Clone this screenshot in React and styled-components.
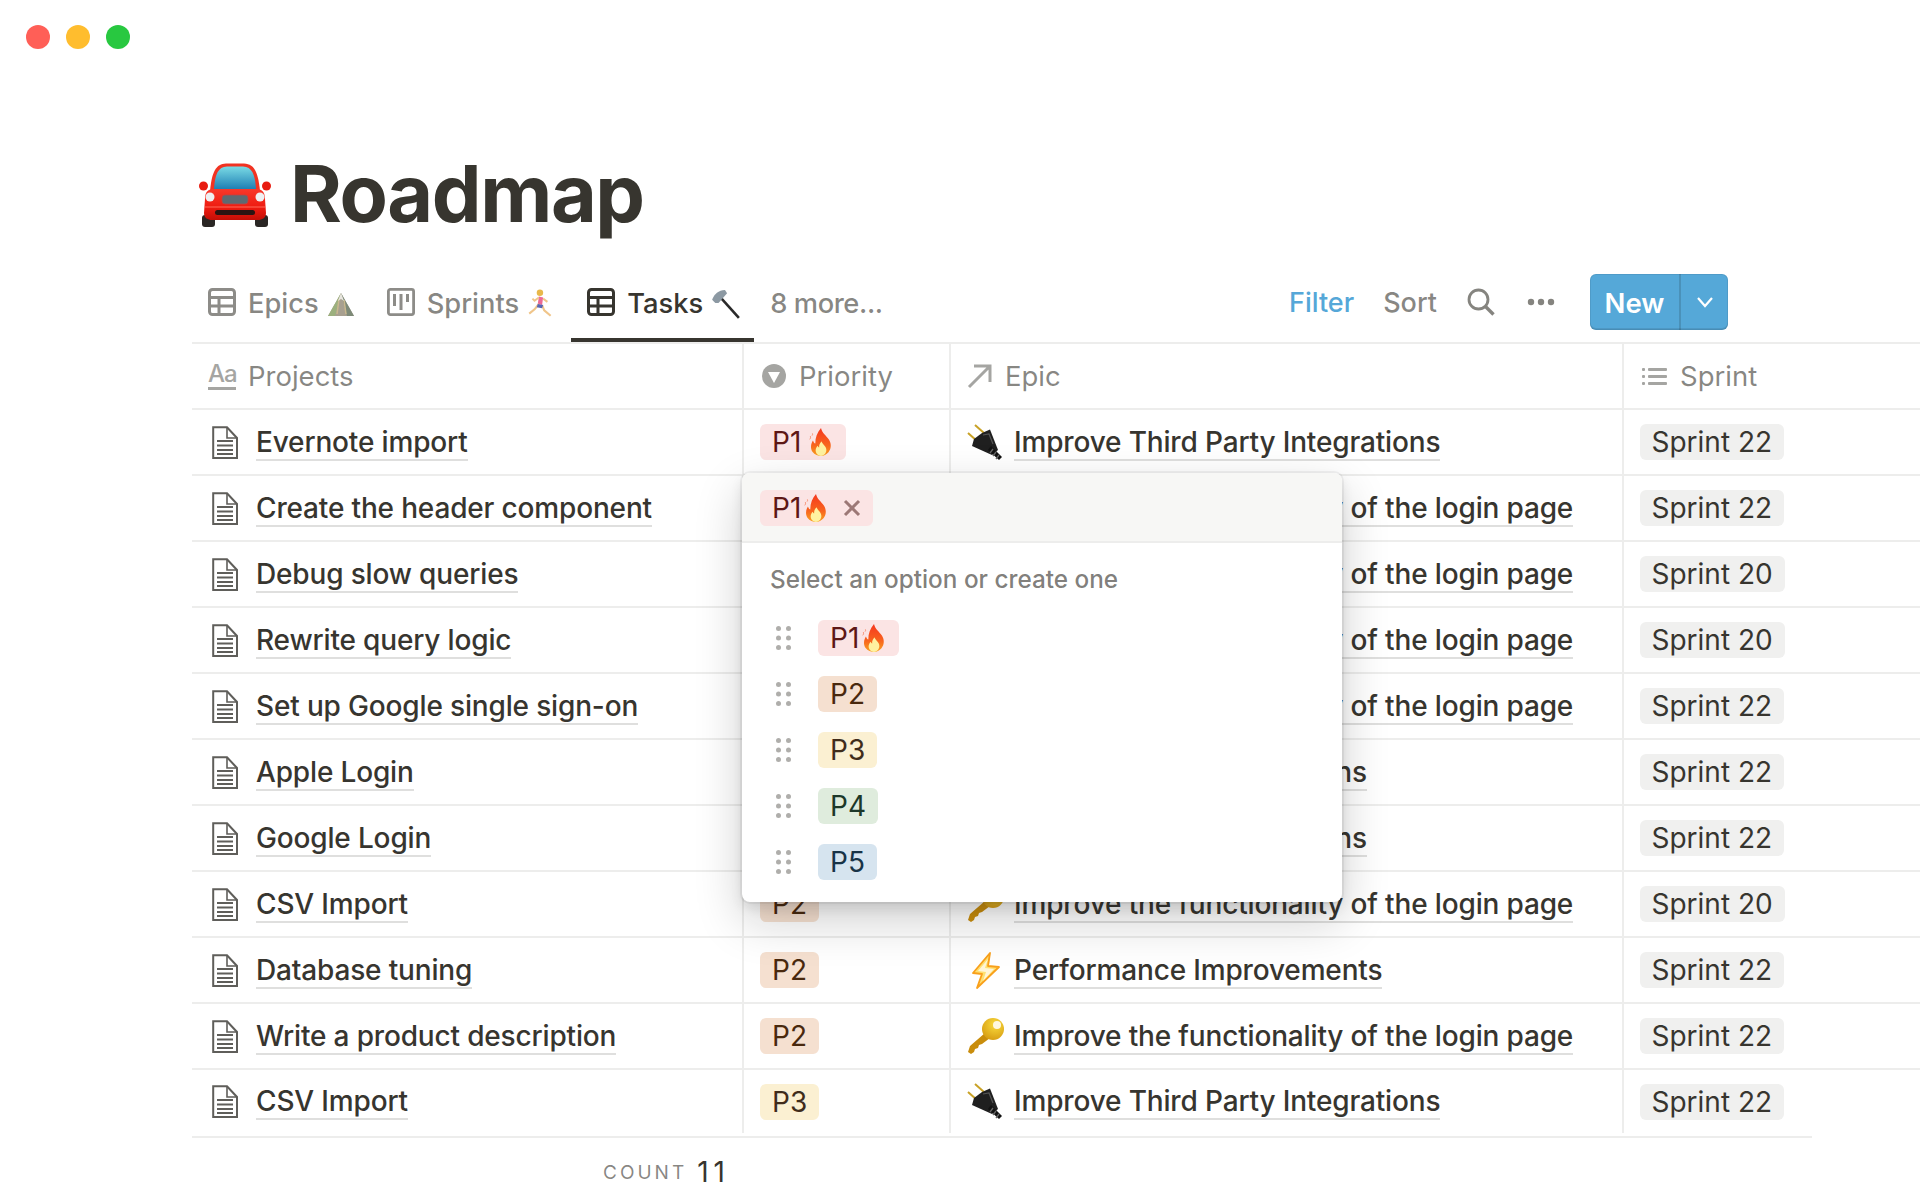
import React from "react";
import styled, { createGlobalStyle } from "styled-components";

const Global = createGlobalStyle`
  html, body { margin: 0; padding: 0; background: #fff; }
  body { font-family: Inter, "Noto Sans", "Liberation Sans", sans-serif; color: #37352f; }
  * { box-sizing: border-box; }
`;

const Page = styled.div`
  position: relative;
  width: 1920px;
  height: 1200px;
  overflow: hidden;
  background: #fff;
`;

const WindowBar = styled.div`
  display: flex;
  gap: 16px;
  height: 74px;
  padding: 25px 26px 0;
`;
const Light = styled.span`
  width: 24px;
  height: 24px;
  border-radius: 50%;
  background: ${(p) => p.$c};
`;

const Content = styled.main`
  padding-left: 192px;
`;

const TitleRow = styled.header`
  display: flex;
  align-items: center;
  height: 92px;
  margin-top: 75px;
  padding-left: 7px;
  gap: 19px;
`;
const H1 = styled.h1`
  margin: 0 0 5px;
  font-size: 79px;
  font-weight: 700;
  letter-spacing: -1.4px;
  line-height: 92px;
  color: #37352f;
`;

const Bar = styled.div`
  display: flex;
  align-items: stretch;
  justify-content: space-between;
  height: 77px;
  margin-top: 26px;
  border-bottom: 2px solid #ededec;
`;
const Tabs = styled.nav`
  display: flex;
  align-items: stretch;
`;
const Tab = styled.div`
  display: flex;
  align-items: center;
  padding: 0 ${(p) => p.$pr || 16}px 4px 16px;
  gap: 12px;
  font-size: 27.3px;
  font-weight: 500;
  white-space: nowrap;
  color: ${(p) => (p.$active ? "#37352f" : "rgba(55,53,47,.6)")};
  box-shadow: ${(p) => (p.$active ? "inset 0 -4px 0 #37352f" : "none")};
`;
const TabLabel = styled.span`
  display: inline-flex;
  align-items: center;
  gap: 8px;
  margin-top: 2px;
`;
const MoreLabel = styled(TabLabel)`
  letter-spacing: -0.4px;
`;
const TabIcon = styled.span`
  display: inline-flex;
  margin-top: -2px;
`;
const Tools = styled.div`
  display: flex;
  align-items: center;
  height: 56px;
  margin-top: 7px;
  margin-right: 192px;
  font-size: 27px;
  font-weight: 500;
`;
const Tool = styled.span`
  color: ${(p) => (p.$blue ? "#55a7d8" : "rgba(55,53,47,.6)")};
  margin-right: ${(p) => p.$mr}px;
  display: inline-flex;
`;
const NewBtn = styled.div`
  display: flex;
  width: 138px;
  height: 56px;
  border-radius: 6px;
  background: #55a8d8;
  box-shadow: inset 0 0 0 1px rgba(15, 15, 15, 0.08), inset 0 -2px 0 rgba(15, 15, 15, 0.1);
  color: #fff;
  font-size: 27.5px;
  font-weight: 600;
`;
const NewLabel = styled.span`
  flex: 0 0 91px;
  display: flex;
  align-items: center;
  justify-content: center;
  padding-top: 1px;
  border-right: 2px solid rgba(15, 15, 15, 0.15);
`;
const NewCaret = styled.span`
  flex: 1;
  display: flex;
  align-items: center;
  justify-content: center;
`;

const Row = styled.div`
  display: grid;
  grid-template-columns: 552px 207px 673px 1fr;
  height: ${(p) => p.$h || 66}px;
  border-bottom: ${(p) => (p.$last ? "none" : "2px solid #ededec")};
`;
const Cell = styled.div`
  display: flex;
  align-items: center;
  min-width: 0;
  padding-left: ${(p) => p.$pl || 16}px;
  border-right: ${(p) => (p.$noline ? "none" : "2px solid #ededec")};
  white-space: nowrap;
`;
const HeadCell = styled(Cell)`
  font-size: 27.5px;
  font-weight: 400;
  color: rgba(55, 53, 47, 0.6);
  gap: ${(p) => p.$gap || 12}px;
`;
const AaIcon = styled.span`
  display: inline-block;
  width: 28px;
  height: 28px;
  font-size: 24px;
  line-height: 24px;
  font-weight: 500;
  letter-spacing: -1px;
  color: #a5a5a2;
  text-align: center;
  border-bottom: 3px solid #a5a5a2;
`;
const TitleText = styled.span`
  font-size: 28px;
  font-weight: 500;
  letter-spacing: -0.16px;
  color: #37352f;
  line-height: 33px;
  margin-top: 2px;
  margin-left: ${(p) => p.$ml || 0}px;
  border-bottom: 2px solid rgba(55, 53, 47, 0.16);
`;
const Pill = styled.span`
  display: inline-flex;
  align-items: center;
  height: 36px;
  padding: 0 12px;
  border-radius: 6px;
  font-size: 28px;
  font-weight: 400;
  white-space: nowrap;
  background: ${(p) => p.$bg};
  color: ${(p) => p.$fg};
`;
const EmojiBox = styled.span`
  display: inline-flex;
  flex: 0 0 37px;
  margin-right: 10px;
  justify-content: center;
`;
const FlexSvg = styled.svg`
  display: block;
  flex: none;
`;
const FlameWrap = styled.span`
  display: inline-flex;
  margin-left: ${(p) => p.$m}px;
  margin-right: -2px;
`;

const BottomLine = styled.div`
  width: 1620px;
  height: 2px;
  margin-top: 3px;
  background: #ededec;
`;
const Footer = styled.div`
  display: flex;
  align-items: center;
  justify-content: flex-end;
  width: 538px;
  height: 68px;
  gap: 10px;
`;
const CountLabel = styled.span`
  font-size: 19px;
  letter-spacing: 3px;
  color: rgba(55, 53, 47, 0.6);
`;
const CountValue = styled.span`
  font-size: 28px;
  letter-spacing: 5px;
  color: #37352f;
`;

const Popup = styled.div`
  position: absolute;
  left: 742px;
  top: 473px;
  width: 600px;
  height: 429px;
  background: #fff;
  border-radius: 8px;
  overflow: hidden;
  box-shadow: 0 0 0 2px rgba(15, 15, 15, 0.05), 0 6px 12px rgba(15, 15, 15, 0.1), 0 18px 48px rgba(15, 15, 15, 0.2);
`;
const PopupHead = styled.div`
  display: flex;
  align-items: center;
  height: 70px;
  padding: 2px 18px 0;
  background: #f7f7f5;
  border-bottom: 2px solid #ededec;
`;
const Hint = styled.div`
  padding: 21px 28px 0;
  height: 67px;
  font-size: 24.3px;
  font-weight: 500;
  line-height: 30px;
  color: rgba(55, 53, 47, 0.65);
`;
const Option = styled.div`
  display: flex;
  align-items: center;
  height: 56px;
  padding-left: 34px;
  gap: 26px;
`;
const Close = styled.span`
  display: inline-flex;
  margin-left: 14px;
`;

const Flame = ({ id, m }) => (
  <FlameWrap $m={m}>
    <FlexSvg width="30" height="30" viewBox="0 0 28 28">
      <defs>
        <linearGradient id={id} x1="0" y1="0" x2="0" y2="1">
          <stop offset="0" stopColor="#f5371f" />
          <stop offset=".6" stopColor="#f8641d" />
          <stop offset="1" stopColor="#f9a11f" />
        </linearGradient>
      </defs>
      <path d="M14 1c1 5 5 7 7.500 11 2.500 4 2 8.500-.5 11.500-2 2.200-4.500 3.500-7 3.500s-6-1-8-4c-2-3-1.600-7.500.5-10.500.5 1.500 1 2.500 2.200 3C8.500 10 10.500 5 14 1z" fill={`url(#${id})`} />
      <path d="M14.500 13c.5 3 4.500 4.500 4.500 8.500 0 3-2.300 5.500-5 5.500s-5-2.200-5-5c0-2.200 1-3.500 2-4.500.3 1 .7 1.500 1.300 1.700-.3-2.200.6-4.500 2.200-5.700z" fill="#fff2a0" />
      <path d="M4 8.500c.5 1 .3 2-.5 3M6 6c.3.7.2 1.300-.3 2" stroke="#f78a6a" strokeWidth=".9" fill="none" />
    </FlexSvg>
  </FlameWrap>
);

const Car = () => (
  <FlexSvg width="72" height="64" viewBox="0 0 72 64">
    <defs>
      <linearGradient id="carBody" x1="0" y1="0" x2="0" y2="1">
        <stop offset="0" stopColor="#f8382a" />
        <stop offset=".6" stopColor="#ee1b10" />
        <stop offset="1" stopColor="#c20e06" />
      </linearGradient>
      <linearGradient id="carGlass" x1="0" y1="0" x2="0" y2="1">
        <stop offset="0" stopColor="#7adbe5" />
        <stop offset="1" stopColor="#1f7fb4" />
      </linearGradient>
    </defs>
    <rect x="3" y="52" width="13" height="12" rx="3" fill="#2a2624" />
    <rect x="56" y="52" width="13" height="12" rx="3" fill="#2a2624" />
    <circle cx="4.500" cy="23" r="4.500" fill="#e81c10" />
    <circle cx="67.500" cy="23" r="4.500" fill="#e81c10" />
    <path d="M11 28 C13 8 17 1 27 0.500 H45 C55 1 59 8 61 28 Z" fill="#f13322" />
    <path d="M15 26 C16 11 19 4 28 3.500 H44 C53 4 56 11 57 26 Z" fill="url(#carGlass)" />
    <path d="M6 36 C6 28 10 26 15 26 H57 C62 26 66 28 66 36 L67 50 C67 55 63 57 59 57 H13 C9 57 5 55 5 50 Z" fill="url(#carBody)" />
    <circle cx="11" cy="34" r="4.500" fill="#eef0f2" />
    <circle cx="61" cy="34" r="4.500" fill="#eef0f2" />
    <rect x="23" y="32" width="26" height="9" rx="3" fill="#5d6a72" stroke="#b44" strokeWidth=".8" />
    <rect x="16" y="47" width="40" height="5" rx="2.500" fill="#2a1412" />
    <path d="M6 44 H66" stroke="#ff6a58" strokeWidth="1" />
  </FlexSvg>
);

const Plug = () => (
  <FlexSvg width="37" height="37" viewBox="0 0 37 37">
    <path d="M8 1 L17 9 M1 9 L10 17" stroke="#c9a227" strokeWidth="2" />
    <path d="M14 7 L22 3.500 L30 24 L24 29 L4 20 L6 13 Z" fill="#1f1f1f" transform="translate(1 2)" />
    <path d="M24 22 L35 33 L32 36 L21 26 Z" fill="#111" />
    <path d="M26 25 L23 29 M29 28 L26 32 M32 31 L29 35" stroke="#666" strokeWidth="1.300" />
    <path d="M16 11 L22 10 L26 20" stroke="#555" strokeWidth="1.200" fill="none" />
  </FlexSvg>
);

const Key = ({ id }) => (
  <FlexSvg width="37" height="36" viewBox="0 0 37 36">
    <defs>
      <radialGradient id={id} cx=".6" cy=".3" r=".9">
        <stop offset="0" stopColor="#fadb3c" />
        <stop offset="1" stopColor="#cf8f0a" />
      </radialGradient>
    </defs>
    <path d="M18 15 L3 28 L1 34 L4 36 L7 34 L8 31 L11 30 L12 27 L15 26 L23 20 Z" fill="#c98d0c" />
    <circle cx="26" cy="11" r="11" fill={`url(#${id})`} />
    <circle cx="30" cy="7" r="4" fill="#fff8e0" />
  </FlexSvg>
);

const Bolt = () => (
  <FlexSvg width="30" height="37" viewBox="0 0 30 37">
    <path d="M19 1 L2 21 L11 22 L6 36 L28 15 L17 14 Z" fill="#ffe070" stroke="#f9a01b" strokeWidth="1.800" strokeLinejoin="round" />
    <path d="M17 7 L7 19 L15 20 L12 29 L23 17 L14 16 Z" fill="#fff5d8" />
  </FlexSvg>
);

const Mountain = () => (
  <FlexSvg width="28" height="28" viewBox="0 0 28 28">
    <path d="M14 3 L27 26 H1 Z" fill="#a8a090" />
    <path d="M14 3 L20 26 H27 Z" fill="#7e8a78" />
    <path d="M14 3 L8 26 H1 Z" fill="#9cb07e" />
    <path d="M12 9 L10 24 M17 10 L19 24" stroke="#c9b88e" strokeWidth="1.500" />
    <path d="M14 3 L11 11 L14 9 L17 11 Z" fill="#e8e6df" />
  </FlexSvg>
);

const Runner = () => (
  <FlexSvg width="28" height="30" viewBox="0 0 24 28">
    <circle cx="11" cy="3.500" r="3" fill="#e8b84a" />
    <path d="M10 7 L14 8 L13 15 L9 14 Z" fill="#ec6a96" />
    <path d="M10 14 L6 19 L1 23 M13 15 L15 20 L21 25" stroke="#f0c58a" strokeWidth="2" fill="none" />
    <path d="M10 8 L6 11 L4 9 M14 9 L18 12" stroke="#f0c58a" strokeWidth="1.800" fill="none" />
    <path d="M9 14 L14 15 L13 18 L8 17 Z" fill="#5866b4" />
  </FlexSvg>
);

const Hammer = () => (
  <FlexSvg width="29" height="30" viewBox="0 0 27 28">
    <path d="M9 8 L26 27" stroke="#2a2a2a" strokeWidth="2.400" />
    <path d="M1 10 C3 5 7 1 13 1 L15 4 L7 13 L4 13 Z" fill="#8c99a3" />
  </FlexSvg>
);

const IconTable = ({ c }) => (
  <FlexSvg width="28" height="28" viewBox="0 0 28 28" fill="none" stroke={c} strokeWidth="3">
    <rect x="1.500" y="1.500" width="25" height="25" rx="3" />
    <path d="M1 9.500 H27 M1 18 H27 M11 9.500 V27" />
  </FlexSvg>
);
const IconBoard = ({ c }) => (
  <FlexSvg width="28" height="28" viewBox="0 0 28 28" fill="none" stroke={c} strokeWidth="2.800">
    <rect x="1.400" y="1.400" width="25.200" height="25.200" rx="2" />
    <path d="M7.500 6 V18 M14 6 V22 M20.500 6 V14" strokeWidth="3" />
  </FlexSvg>
);
const DocIcon = () => (
  <FlexSvg width="26" height="33" viewBox="0 0 26 33" fill="none" stroke="#5f5e5a" strokeWidth="2">
    <path d="M1.200 1.200 H15 L25 12 V32 H1.200 Z" />
    <path d="M15 1.200 V12 H25" strokeWidth="1.600" />
    <path d="M5 15 H21 M5 19.500 H21 M5 24 H21 M5 28 H21" strokeWidth="2" />
  </FlexSvg>
);
const PriorityIcon = () => (
  <FlexSvg width="24" height="24" viewBox="0 0 24 24">
    <circle cx="12" cy="12" r="12" fill="#a5a5a2" />
    <path d="M6 8 H18 L12 19 Z" fill="#fff" />
  </FlexSvg>
);
const ArrowIcon = () => (
  <FlexSvg width="26" height="26" viewBox="0 0 26 26" fill="none" stroke="#a5a5a2" strokeWidth="3">
    <path d="M2 24 L23 3 M7 3 H23 V19" />
  </FlexSvg>
);
const ListIcon = () => (
  <FlexSvg width="25" height="22" viewBox="0 0 25 22" fill="#a5a5a2">
    <rect x="0" y="3" width="3" height="3" rx="1" />
    <rect x="0" y="10" width="3" height="3" rx="1" />
    <rect x="0" y="17" width="3" height="3" rx="1" />
    <rect x="6" y="3" width="19" height="3" rx="1" />
    <rect x="6" y="10" width="19" height="3" rx="1" />
    <rect x="6" y="17" width="19" height="3" rx="1" />
  </FlexSvg>
);
const SearchIcon = () => (
  <FlexSvg width="28" height="28" viewBox="0 0 28 28" fill="none" stroke="#85847f" strokeWidth="2.800">
    <circle cx="11.500" cy="11.500" r="9.500" />
    <path d="M18.500 18.500 L26.500 26.500" strokeWidth="3.400" />
  </FlexSvg>
);
const DotsIcon = () => (
  <FlexSvg width="28" height="8" viewBox="0 0 28 8" fill="#85847f">
    <circle cx="4" cy="4" r="3.200" />
    <circle cx="14" cy="4" r="3.200" />
    <circle cx="24" cy="4" r="3.200" />
  </FlexSvg>
);
const Chevron = () => (
  <FlexSvg width="18" height="12" viewBox="0 0 18 12" fill="none" stroke="#fff" strokeWidth="2.200">
    <path d="M2 2 L9 10 L16 2" />
  </FlexSvg>
);
const XIcon = () => (
  <FlexSvg width="18" height="18" viewBox="0 0 18 18" fill="none" stroke="#9c7876" strokeWidth="3">
    <path d="M2 2 L16 16 M16 2 L2 16" />
  </FlexSvg>
);
const Grip = () => (
  <FlexSvg width="16" height="24" viewBox="0 0 16 24" fill="#afaeab">
    {[2.5, 12, 21.5].flatMap((y) => [2.5, 12.5].map((x) => <circle key={`${x}-${y}`} cx={x} cy={y} r="2.500" />))}
  </FlexSvg>
);

const P = {
  P1: { bg: "#fbe4e4", fg: "#5d1715" },
  P2: { bg: "#f5e0d0", fg: "#49290e" },
  P3: { bg: "#fbf0d2", fg: "#402c1b" },
  P4: { bg: "#dfecdd", fg: "#1c3829" },
  P5: { bg: "#d6e4ef", fg: "#183347" },
};

const THIRD = "Improve Third Party Integrations";
const LOGIN = "Improve the functionality of the login page";
const HIDDEN = "Improve Login Integrations";
const rows = [
  ["Evernote import", "P1", "plug", THIRD, "22"],
  ["Create the header component", "P1", "key", LOGIN, "22"],
  ["Debug slow queries", "P1", "key", LOGIN, "20"],
  ["Rewrite query logic", "P1", "key", LOGIN, "20"],
  ["Set up Google single sign-on", "P1", "key", LOGIN, "22"],
  ["Apple Login", "P1", "key", HIDDEN, "22"],
  ["Google Login", "P1", "key", HIDDEN, "22"],
  ["CSV Import", "P2", "key", LOGIN, "20"],
  ["Database tuning", "P2", "bolt", "Performance Improvements", "22"],
  ["Write a product description", "P2", "key", LOGIN, "22"],
  ["CSV Import", "P3", "plug", THIRD, "22"],
];

const Priority = ({ name, id, m, children }) => (
  <Pill $bg={P[name].bg} $fg={P[name].fg}>
    {name}
    {name === "P1" && <Flame id={id} m={m} />}
    {children}
  </Pill>
);

export default function App() {
  return (
    <Page>
      <Global />
      <WindowBar>
        <Light $c="#ff5f57" />
        <Light $c="#ffbd2e" />
        <Light $c="#28c840" />
      </WindowBar>
      <Content>
        <TitleRow>
          <Car />
          <H1>Roadmap</H1>
        </TitleRow>
        <Bar>
          <Tabs>
            <Tab>
              <TabIcon><IconTable c="#8d8c88" /></TabIcon>
              <TabLabel>Epics <Mountain /></TabLabel>
            </Tab>
            <Tab>
              <TabIcon><IconBoard c="#8d8c88" /></TabIcon>
              <TabLabel>Sprints <Runner /></TabLabel>
            </Tab>
            <Tab $active $pr={14}>
              <TabIcon><IconTable c="#37352f" /></TabIcon>
              <TabLabel>Tasks <Hammer /></TabLabel>
            </Tab>
            <Tab><MoreLabel>8 more...</MoreLabel></Tab>
          </Tabs>
          <Tools>
            <Tool $blue $mr={29}>Filter</Tool>
            <Tool $mr={30}>Sort</Tool>
            <Tool $mr={32}><SearchIcon /></Tool>
            <Tool $mr={35}><DotsIcon /></Tool>
            <NewBtn>
              <NewLabel>New</NewLabel>
              <NewCaret><Chevron /></NewCaret>
            </NewBtn>
          </Tools>
        </Bar>
        <Row $h={66}>
          <HeadCell><AaIcon>Aa</AaIcon>Projects</HeadCell>
          <HeadCell $pl={18} $gap={13}><PriorityIcon />Priority</HeadCell>
          <HeadCell $pl={16}><ArrowIcon />Epic</HeadCell>
          <HeadCell $pl={18} $gap={13} $noline><ListIcon />Sprint</HeadCell>
        </Row>
        {rows.map((r, i) => (
          <Row key={i} $last={i === rows.length - 1} $h={i === rows.length - 1 ? 63 : 66}>
            <Cell $pl={20}>
              <DocIcon />
              <TitleText $ml={18}>{r[0]}</TitleText>
            </Cell>
            <Cell><Priority name={r[1]} id={`f${i}`} m={5} /></Cell>
            <Cell $pl={16}>
              <EmojiBox>
                {r[2] === "plug" && <Plug />}
                {r[2] === "key" && <Key id={`k${i}`} />}
                {r[2] === "bolt" && <Bolt />}
              </EmojiBox>
              <TitleText>{r[3]}</TitleText>
            </Cell>
            <Cell $noline $pl={15.5}>
              <Pill $bg="#f0f0ef" $fg="#37352f">Sprint {r[4]}</Pill>
            </Cell>
          </Row>
        ))}
        <BottomLine />
        <Footer>
          <CountLabel>COUNT</CountLabel>
          <CountValue>11</CountValue>
        </Footer>
      </Content>
      <Popup>
        <PopupHead>
          <Priority name="P1" id="fh" m={0}>
            <Close><XIcon /></Close>
          </Priority>
        </PopupHead>
        <Hint>Select an option or create one</Hint>
        {Object.keys(P).map((k) => (
          <Option key={k}>
            <Grip />
            <Priority name={k} id={`fo${k}`} m={0} />
          </Option>
        ))}
      </Popup>
    </Page>
  );
}
